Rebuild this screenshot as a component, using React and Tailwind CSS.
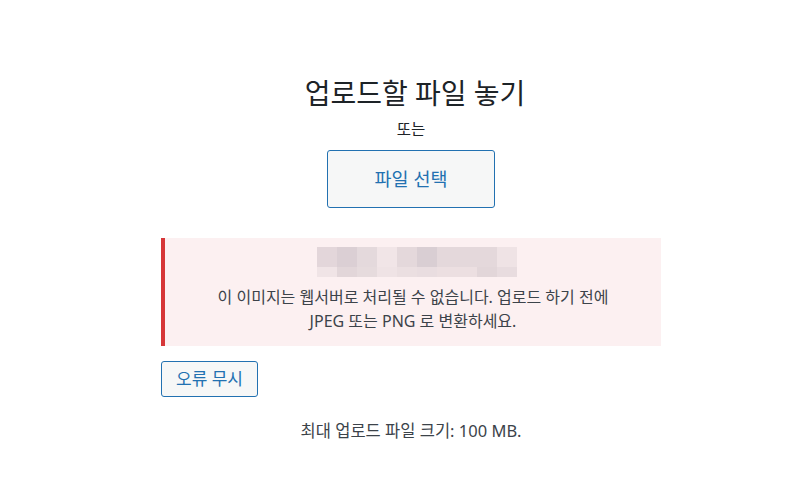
import React from "react";

const row1 = ["#e3d6da", "#dbcfd4", "#e4d9dc", "#f1e5e7", "#e4d8db", "#d9ced3", "#e4d8db", "#e4d8db", "#e4d8db", "#efe3e5"];
const row2 = ["#f0e4e6", "#e2d6d9", "#e6dbdd", "#efe3e5", "#ebdfe1", "#e9dde0", "#ecdfe1", "#ecdfe1", "#e2d6d9", "#e8dcdf"];

export default function App() {
  return (
    <div
      className="w-[805px] h-[486px] bg-white text-[#1d2327] overflow-hidden"
      style={{ fontFamily: '"Noto Sans", "Noto Sans CJK KR", sans-serif' }}
    >
      <div className="ml-[161px] w-[500px] pt-[73px] flex flex-col">
        <div className="flex flex-col items-center">
          <h2 className="text-[28px] leading-[40px] font-normal pl-[8px]">업로드할 파일 놓기</h2>
          <p className="mt-[4px] text-[15.5px] leading-[24px]">또는</p>
          <button className="mt-[9px] w-[168px] h-[58px] rounded-[3px] border border-[#2271b1] bg-[#f6f7f7] text-[#2271b1] text-[18.5px]">
            파일 선택
          </button>
        </div>
        <div className="mt-[30px] h-[108px] bg-[#fcf0f1] border-l-4 border-[#d63638] flex flex-col items-center pt-[9px]">
          <div className="flex flex-col ml-[8px]">
            <div className="flex">
              {row1.map((c, i) => (
                <div key={i} className="w-[20px] h-[20px]" style={{ backgroundColor: c }} />
              ))}
            </div>
            <div className="flex">
              {row2.map((c, i) => (
                <div key={i} className="w-[20px] h-[10px]" style={{ backgroundColor: c }} />
              ))}
            </div>
          </div>
          <p className="mt-[8px] text-[16px] leading-[24px] text-center text-[#3c434a]">
            이 이미지는 웹서버로 처리될 수 없습니다. 업로드 하기 전에
            <br />
            JPEG 또는 PNG 로 변환하세요.
          </p>
        </div>
        <div className="mt-[15px]">
          <button className="w-[97px] h-[36px] rounded-[3px] border border-[#2271b1] bg-[#f6f7f7] text-[#2271b1] text-[17px]">
            오류 무시
          </button>
        </div>
        <p className="mt-[22px] text-center text-[16.5px] leading-[24px] text-[#3c434a]">
          최대 업로드 파일 크기: 100 MB.
        </p>
      </div>
    </div>
  );
}
